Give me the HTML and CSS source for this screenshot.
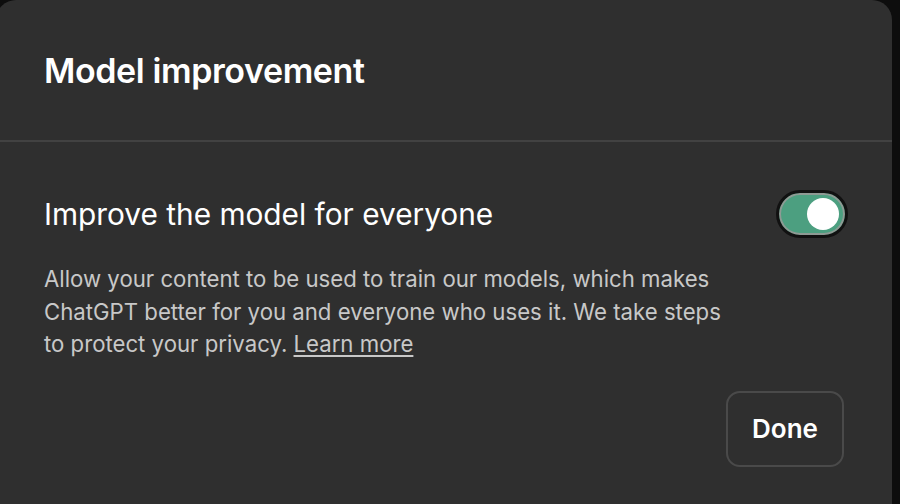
FILE: index.html
```html
<!DOCTYPE html>
<html lang="en">
<head>
    <meta charset="UTF-8">
    <title>Model improvement</title>
    <link rel="stylesheet" href="styles.css">
</head>
<body>
    <div class="dialog">
        <div class="dialog-header">
            <h1 class="dialog-title">Model improvement</h1>
        </div>
        <div class="dialog-body">
            <div class="setting-row">
                <div class="setting-label">Improve the model for everyone</div>
                <button class="switch" role="switch" aria-checked="true">
                    <span class="switch-knob"></span>
                </button>
            </div>
            <p class="setting-desc">
                Allow your content to be used to train our models, which makes
                ChatGPT better for you and everyone who uses it. We take steps
                to protect your privacy. <a href="#" class="learn-more">Learn more</a>
            </p>
            <div class="dialog-actions">
                <button class="done-btn">Done</button>
            </div>
        </div>
    </div>
</body>
</html>
```

FILE: styles.css
```css
* {
    margin: 0;
    padding: 0;
    box-sizing: border-box;
}

body {
    width: 900px;
    height: 504px;
    overflow: hidden;
    background: #0d0d0d;
    font-family: 'Inter', 'Liberation Sans', sans-serif;
    color: #fff;
}

.dialog {
    width: 896px;
    height: 524px;
    margin-left: -4px;
    background: #2f2f2f;
    border-radius: 20px;
}

.dialog-header {
    height: 142px;
    display: flex;
    align-items: center;
    padding-left: 48px;
    border-bottom: 2px solid #424242;
}

.dialog-title {
    font-size: 34px;
    font-weight: 600;
    letter-spacing: -0.4px;
}

.dialog-body {
    padding: 48px 44px 0 48px;
}

.setting-row {
    display: flex;
    align-items: center;
    justify-content: space-between;
    height: 48px;
}

.setting-label {
    font-size: 29.8px;
    font-weight: 400;
}

.switch {
    width: 72px;
    height: 48px;
    border-radius: 24px;
    border: 3px solid #111;
    background: #4c9f80;
    box-shadow: inset 0 0 0 2px #8e9a94;
    display: flex;
    align-items: center;
    justify-content: flex-end;
    padding-right: 6px;
}

.switch-knob {
    width: 32px;
    height: 32px;
    border-radius: 50%;
    background: #fff;
}

.setting-desc {
    margin-top: 25px;
    font-size: 22.2px;
    line-height: 32.5px;
    color: #c8c8c8;
    width: 690px;
}

.learn-more {
    color: #c8c8c8;
    text-decoration: underline;
    text-underline-offset: 3px;
}

.dialog-actions {
    display: flex;
    justify-content: flex-end;
    margin-top: 30px;
    padding-right: 4px;
}

.done-btn {
    width: 118px;
    height: 76px;
    border-radius: 14px;
    border: 2px solid #4a4a4a;
    background: transparent;
    color: #fff;
    font-family: inherit;
    font-size: 26px;
    font-weight: 600;
}
```
